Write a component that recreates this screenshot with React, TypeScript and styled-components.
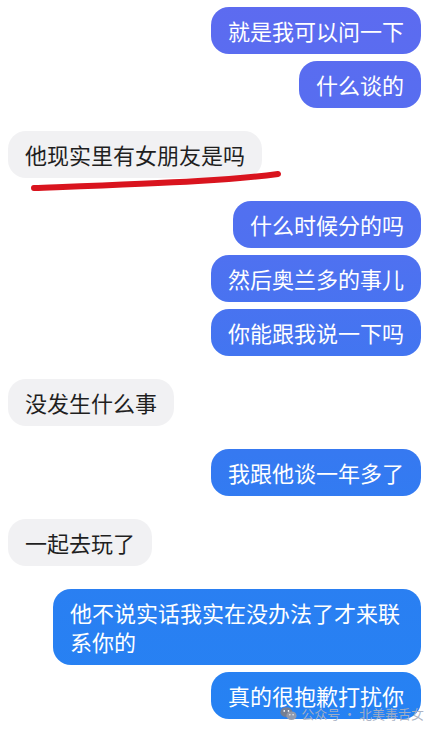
import React from 'react';
import styled, { createGlobalStyle, css } from 'styled-components';

type Side = 'me' | 'them';

interface Group {
  side: Side;
  messages: string[];
  underline?: boolean;
}

const groups: Group[] = [
  { side: 'me', messages: ['就是我可以问一下', '什么谈的'] },
  { side: 'them', messages: ['他现实里有女朋友是吗'], underline: true },
  { side: 'me', messages: ['什么时候分的吗', '然后奥兰多的事儿', '你能跟我说一下吗'] },
  { side: 'them', messages: ['没发生什么事'] },
  { side: 'me', messages: ['我跟他谈一年多了'] },
  { side: 'them', messages: ['一起去玩了'] },
  { side: 'me', messages: ['他不说实话我实在没办法了才来联系你的', '真的很抱歉打扰你'] }
];

const GlobalStyle = createGlobalStyle`
  html, body {
    margin: 0;
    padding: 0;
    background: #ffffff;
  }

  body {
    font-family: "Noto Sans CJK SC", "Noto Sans", sans-serif;
  }
`;

const Screen = styled.div`
  position: relative;
  width: 430px;
  height: 730px;
  overflow: hidden;
  background: #ffffff;
  box-sizing: border-box;
  padding: 7px 9px 0 8px;
  display: flex;
  flex-direction: column;
  gap: 23px;
`;

const MessageGroup = styled.div<{ $side: Side }>`
  position: relative;
  display: flex;
  flex-direction: column;
  gap: 7px;
  align-items: ${({ $side }) => ($side === 'me' ? 'flex-end' : 'flex-start')};
`;

const Bubble = styled.div<{ $side: Side }>`
  max-width: 368px;
  box-sizing: border-box;
  padding: 9px 17px;
  border-radius: 18px;
  font-size: 22px;
  line-height: 29px;
  word-break: break-all;

  ${({ $side }) => ($side === 'me'
    ? css`
      color: #ffffff;
      background: linear-gradient(180deg, #5d6bf0 0%, #4f71f0 35%, #3679f1 62%, #2a7ff2 80%, #2582f3 100%) fixed;
    `
    : css`
      color: #1f1f1f;
      background: #f1f1f3;
    `)}
`;

// hand-drawn red marker stroke under the grey bubble
const Scribble = styled.svg`
  position: absolute;
  left: 20px;
  top: 36px;
  width: 260px;
  height: 24px;
  overflow: visible;
`;

const Watermark = styled.div`
  position: absolute;
  right: 6px;
  bottom: 9px;
  display: flex;
  align-items: center;
  gap: 4px;
  font-size: 13px;
  line-height: 13px;
  color: rgba(168, 176, 194, 0.95);
`;

function WechatIcon (): React.ReactElement {
  return (
    <svg height='15' viewBox='0 0 20 17' width='17'>
      <ellipse cx='7.5' cy='7' fill='rgba(120,125,140,0.95)' rx='7' ry='6' />
      <ellipse cx='13.5' cy='11' fill='rgba(150,155,170,0.95)' rx='6' ry='5' />
      <circle cx='5' cy='5.5' fill='#fff' r='1' />
      <circle cx='10' cy='5.5' fill='#fff' r='1' />
      <circle cx='11.6' cy='10' fill='#fff' r='0.8' />
      <circle cx='15.4' cy='10' fill='#fff' r='0.8' />
    </svg>
  );
}

export default function App (): React.ReactElement {
  return (
    <>
      <GlobalStyle />
      <Screen>
        {groups.map((group, gi) => (
          <MessageGroup
            $side={group.side}
            key={gi}
          >
            {group.messages.map((text, mi) => (
              <Bubble
                $side={group.side}
                key={mi}
              >
                {text}
              </Bubble>
            ))}
            {group.underline && (
              <Scribble viewBox='0 0 260 24'>
                <path
                  d='M6 21 C 60 19, 120 17, 170 14 C 205 12, 235 9, 250 7'
                  fill='none'
                  stroke='#d9141e'
                  strokeLinecap='round'
                  strokeWidth='6'
                />
              </Scribble>
            )}
          </MessageGroup>
        ))}
        <Watermark>
          <WechatIcon />
          <span>公众号 · 北美毒舌女</span>
        </Watermark>
      </Screen>
    </>
  );
}
